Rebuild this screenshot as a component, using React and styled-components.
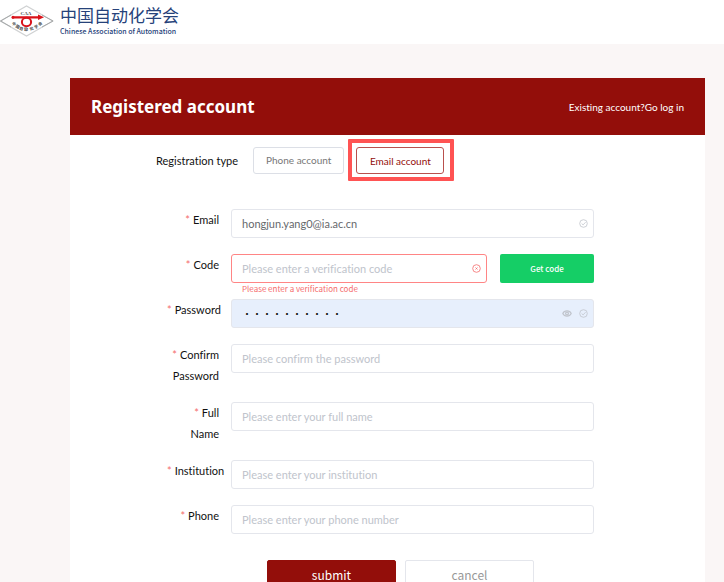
import React, { useState } from "react";
import styled, { createGlobalStyle } from "styled-components";

const cores = {
    fundo: "#faf6f6",
    principal: "#930e0a",
    destaque: "#ff5353",
    erro: "#f56c6c",
    verde: "#15ce66",
    borda: "#e4e6ec",
    placeholder: "#c0c4cc",
    texto: "#111",
    textoCampo: "#66686c",
    logo: "#26427a",
    autofill: "#e7effc",
};

const fonteInterface = `Lato, "Noto Sans CJK SC", sans-serif`;
const fonteTitulo = `"Noto Sans", "Noto Sans CJK SC", sans-serif`;
const fonteMarca = `"Noto Sans CJK SC", "Noto Sans", sans-serif`;

const GlobalStyle = createGlobalStyle`
    * {
        box-sizing: border-box;
    }
    body {
        margin: 0;
        background-color: ${cores.fundo};
        font-family: ${fonteInterface};
        font-variant-ligatures: none;
        color: ${cores.texto};
    }
    button, input {
        font-family: inherit;
        font-variant-ligatures: none;
    }
`;

function Logo() {
    const letras = [
        ["中", 13, 20, 40],
        ["国", 17, 23, 30],
        ["自", 21, 25, 15],
        ["动", 26, 26, 0],
        ["化", 32, 25, -15],
        ["学", 37, 23, -30],
        ["会", 41, 20, -40],
    ];
    return (
        <svg width="54" height="32" viewBox="0 0 54 32" aria-hidden="true">
            <path d="M0.5 16 L26.5 1 L53 16 L26.5 31 Z" fill="#fff" stroke="#d0d2d3" strokeWidth="1.2" />
            <path d="M11 10 L0.5 16 L11 22 M42 10 L53 16 L42 22" fill="none" stroke="#a6a8a9" strokeWidth="1" />
            <text x="26" y="10" fontSize="5" fontWeight="bold" fontFamily="Liberation Serif, serif" textAnchor="middle" fill="#444">CAA</text>
            <path d="M12 11.2 H38 V9.6 L44 12.2 L38 15 V13.4 H12 Z" fill="#d9121a" />
            <circle cx="13" cy="12.3" r="1.5" fill="#d9121a" />
            <ellipse cx="26.5" cy="17" rx="4.6" ry="4.2" fill="none" stroke="#d9121a" strokeWidth="2" />
            {letras.map(([letra, x, y, giro]) => (
                <text key={letra} x={x} y={y} fontSize="4" fontWeight="bold" fontFamily="Noto Sans CJK SC, sans-serif" textAnchor="middle" fill="#444" transform={`rotate(${giro} ${x} ${y})`}>
                    {letra}
                </text>
            ))}
        </svg>
    );
}

function IconeValido() {
    return (
        <svg width="9" height="9" viewBox="0 0 9 9" fill="none" stroke="currentColor" strokeWidth="0.8" aria-hidden="true">
            <circle cx="4.5" cy="4.5" r="3.8" />
            <path d="M2.6 4.5 L4.1 5.9 L6.6 3.2" />
        </svg>
    );
}

function IconeErro() {
    return (
        <svg width="9" height="9" viewBox="0 0 9 9" fill="none" stroke="currentColor" strokeWidth="0.8" aria-hidden="true">
            <circle cx="4.5" cy="4.5" r="3.8" />
            <path d="M3.6 3.6 L5.4 5.4 M5.4 3.6 L3.6 5.4" strokeWidth="1" />
        </svg>
    );
}

function IconeOlho() {
    return (
        <svg width="10" height="9" viewBox="0 0 10 9" fill="none" stroke="currentColor" strokeWidth="1.2" aria-hidden="true">
            <path d="M0.8 4.5 C2.5 1.1 7.5 1.1 9.2 4.5 C7.5 7.9 2.5 7.9 0.8 4.5 Z" />
            <circle cx="5" cy="4.5" r="1.4" />
        </svg>
    );
}

const campos = [
    { id: "email", titulo: "Email", tipo: "text", valido: true },
    { id: "code", titulo: "Code", tipo: "text", dica: "Please enter a verification code", erro: "Please enter a verification code", botao: "Get code" },
    { id: "password", titulo: "Password", tipo: "password", valido: true, preenchido: true },
    { id: "confirm", titulo: "Confirm Password", tipo: "password", dica: "Please confirm the password" },
    { id: "name", titulo: "Full Name", tipo: "text", dica: "Please enter your full name" },
    { id: "institution", titulo: "Institution", tipo: "text", dica: "Please enter your institution" },
    { id: "phone", titulo: "Phone", tipo: "text", dica: "Please enter your phone number" },
];

function CampoFormulario({ campo, valor, alterar }) {
    const [visivel, setVisivel] = useState(false);

    return (
        <LinhaCampo>
            <Rotulo htmlFor={campo.id}>{campo.titulo}</Rotulo>
            <AreaCampo>
                <CaixaInput>
                    <Input
                        id={campo.id}
                        type={visivel ? "text" : campo.tipo}
                        value={valor}
                        placeholder={campo.dica}
                        onChange={(e) => alterar(campo.id, e.target.value)}
                        $erro={!!campo.erro}
                        $preenchido={campo.preenchido}
                    />
                    <Icones $erro={!!campo.erro}>
                        {campo.preenchido && (
                            <BotaoOlho type="button" aria-label="Show password" onClick={() => setVisivel(!visivel)}>
                                <IconeOlho />
                            </BotaoOlho>
                        )}
                        {campo.valido && <IconeValido />}
                        {campo.erro && <IconeErro />}
                    </Icones>
                    {campo.erro && <MensagemErro>{campo.erro}</MensagemErro>}
                </CaixaInput>
                {campo.botao && <BotaoCodigo type="button">{campo.botao}</BotaoCodigo>}
            </AreaCampo>
        </LinhaCampo>
    );
}

export default function App() {
    const [tipo, setTipo] = useState("email");
    const [objeto, setObjeto] = useState({
        email: "hongjun.yang0@ia.ac.cn",
        password: "abcdefghij",
    });

    const alterar = (id, valor) => setObjeto({ ...objeto, [id]: valor });

    return (
        <>
            <GlobalStyle />
            <Cabecalho>
                <Logo />
                <NomeAssociacao>
                    <NomeChines lang="zh">中国自动化学会</NomeChines>
                    <NomeIngles>Chinese Association of Automation</NomeIngles>
                </NomeAssociacao>
            </Cabecalho>
            <Conteudo>
                <Cartao>
                    <Faixa>
                        <Titulo>Registered account</Titulo>
                        <LinkEntrar href="#login">Existing account?Go log in</LinkEntrar>
                    </Faixa>
                    <LinhaTipo>
                        <TextoTipo>Registration type</TextoTipo>
                        <BotaoTipo type="button" $ativo={tipo === "phone"} onClick={() => setTipo("phone")}>
                            Phone account
                        </BotaoTipo>
                        <Moldura>
                            <BotaoTipo type="button" $ativo={tipo === "email"} onClick={() => setTipo("email")}>
                                Email account
                            </BotaoTipo>
                        </Moldura>
                    </LinhaTipo>
                    <Formulario onSubmit={(e) => e.preventDefault()}>
                        {campos.map((campo) => (
                            <CampoFormulario key={campo.id} campo={campo} valor={objeto[campo.id] || ""} alterar={alterar} />
                        ))}
                        <Acoes>
                            <BotaoAcao type="submit" $principal>submit</BotaoAcao>
                            <BotaoAcao type="button">cancel</BotaoAcao>
                        </Acoes>
                    </Formulario>
                </Cartao>
            </Conteudo>
        </>
    );
}


// ESTILOS


const Cabecalho = styled.header`
    display: flex;
    align-items: center;
    gap: 6px;
    height: 44px;
    padding-bottom: 2px;
    background-color: #fff;
`;

const NomeAssociacao = styled.div`
    display: flex;
    flex-direction: column;
    color: ${cores.logo};
    font-family: ${fonteMarca};
`;

const NomeChines = styled.span`
    font-size: 17px;
    line-height: 20px;
`;

const NomeIngles = styled.span`
    font-size: 7px;
    line-height: 12px;
    font-weight: 500;
`;

const Conteudo = styled.main`
    padding: 34px 19px 0 70px;
`;

const Cartao = styled.section`
    background-color: #fff;
`;

const Faixa = styled.div`
    display: flex;
    align-items: center;
    justify-content: space-between;
    height: 57px;
    padding: 0 21px;
    background-color: ${cores.principal};
    color: #fff;
`;

const Titulo = styled.h1`
    margin: 0;
    font-family: ${fonteTitulo};
    font-size: 17px;
    font-weight: 700;
`;

const LinkEntrar = styled.a`
    color: inherit;
    font-size: 10px;
    text-decoration: none;
`;

const LinhaTipo = styled.div`
    display: flex;
    align-items: center;
    padding: 4px 0 0 86px;
`;

const TextoTipo = styled.span`
    width: 97px;
    font-size: 11px;
    white-space: nowrap;
`;

const BotaoTipo = styled.button`
    min-width: 88px;
    height: 27px;
    padding: 0 12px;
    border: 1px solid ${({ $ativo }) => ($ativo ? "#b9504d" : "#dcdfe6")};
    border-radius: 3px;
    background-color: #fff;
    color: ${({ $ativo }) => ($ativo ? cores.principal : "#777")};
    font-size: 10px;
`;

const Moldura = styled.div`
    margin-left: 4px;
    padding: 4px 6px 3px 4px;
    border: 4px solid ${cores.destaque};
    border-radius: 1px;
    display: flex;
`;

const Formulario = styled.form`
    display: flex;
    flex-direction: column;
    gap: 16px;
    padding: 28px 111px 0 97px;
`;

const LinhaCampo = styled.div`
    display: flex;
    align-items: flex-start;
`;

const Rotulo = styled.label`
    flex: none;
    width: 64px;
    padding-right: 12px;
    font-size: 11px;
    line-height: 21px;
    text-align: right;

    &::before {
        content: "*";
        margin-right: 3px;
        color: ${cores.erro};
    }
`;

const AreaCampo = styled.div`
    flex: 1;
    display: flex;
    gap: 13px;
`;

const CaixaInput = styled.div`
    position: relative;
    flex: 1;
`;

const Input = styled.input`
    display: block;
    width: 100%;
    height: 29px;
    padding: 0 40px 0 10px;
    border: 1px solid ${({ $erro }) => ($erro ? "#ff8585" : cores.borda)};
    border-radius: 3px;
    outline: none;
    background-color: ${({ $preenchido }) => ($preenchido ? cores.autofill : "#fff")};
    color: ${({ $preenchido }) => ($preenchido ? "#111" : cores.textoCampo)};
    font-family: ${({ $preenchido }) => ($preenchido ? fonteMarca : fonteInterface)};
    font-size: ${({ $preenchido }) => ($preenchido ? "10px" : "11px")};

    &::placeholder {
        color: ${cores.placeholder};
    }
`;

const Icones = styled.span`
    position: absolute;
    top: 0;
    right: 6px;
    height: 28px;
    display: flex;
    align-items: center;
    gap: 7px;
    color: ${({ $erro }) => ($erro ? cores.erro : cores.placeholder)};
`;

const BotaoOlho = styled.button`
    display: flex;
    padding: 0;
    border: none;
    background: none;
    color: inherit;
`;

const MensagemErro = styled.span`
    position: absolute;
    top: 100%;
    left: 11px;
    color: ${cores.erro};
    font-family: ${fonteMarca};
    font-size: 8px;
    line-height: 12px;
`;

const BotaoCodigo = styled.button`
    width: 94px;
    height: 29px;
    border: none;
    border-radius: 2px;
    background-color: ${cores.verde};
    color: #fff;
    font-family: ${fonteMarca};
    font-size: 8px;
    font-weight: 500;
`;

const Acoes = styled.div`
    display: flex;
    gap: 9px;
    padding: 10px 0 0 100px;
`;

const BotaoAcao = styled.button`
    width: 129px;
    height: 29px;
    border: 1px solid ${({ $principal }) => ($principal ? cores.principal : cores.borda)};
    border-radius: 2px;
    background-color: ${({ $principal }) => ($principal ? cores.principal : "#fff")};
    color: ${({ $principal }) => ($principal ? "#fff" : "#999")};
    font-family: ${fonteMarca};
    font-size: 12px;
`;
